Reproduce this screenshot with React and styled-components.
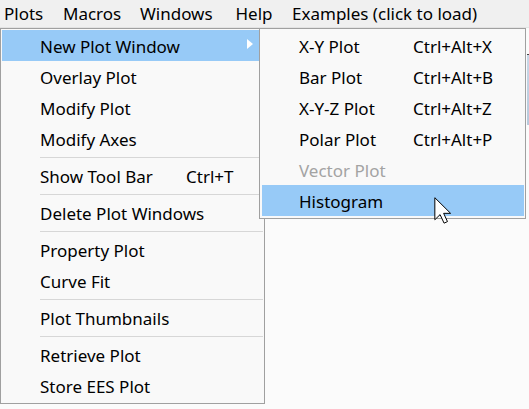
import React from "react";
import styled, { createGlobalStyle } from "styled-components";

const GlobalStyle = createGlobalStyle`
  html, body {
    margin: 0;
    padding: 0;
  }
  body {
    background: #fbfbfb;
    font-family: "Noto Sans", "Open Sans", sans-serif;
  }
`;

const Window = styled.div`
  position: relative;
  width: 529px;
  height: 409px;
  overflow: hidden;
  display: flex;
  flex-direction: column;
  background: #fbfbfb;
`;

const MenuBar = styled.div`
  display: flex;
  height: 28px;
  box-sizing: border-box;
  padding: 1px 0 0 4px;
  background: #f0f0f0;
  border-bottom: 1px solid #e3e3e3;
  font-size: 17px;
  line-height: 26px;
  color: #000;
`;

const BarItem = styled.div`
  width: ${(p) => p.$w}px;
  flex: none;
  white-space: nowrap;
`;

const Content = styled.div`
  flex: 1;
  display: flex;
  justify-content: flex-end;
`;

const EdgeStrip = styled.div`
  width: 2px;
  height: 70px;
  margin-top: 26px;
  border-top: 1px solid #444;
  background: linear-gradient(#c9d8e8, #b7c9dc);
`;

const MenuPanel = styled.div`
  position: absolute;
  top: 28px;
  left: ${(p) => p.$left}px;
  width: ${(p) => p.$width}px;
  box-sizing: border-box;
  padding: ${(p) => p.$pad};
  background: #f9f9f9;
  border: 1px solid #a0a0a0;
`;

const Item = styled.div`
  display: flex;
  height: 31px;
  box-sizing: border-box;
  padding: 3px 0 0 ${(p) => p.$indent}px;
  font-size: 17px;
  line-height: 28px;
  white-space: nowrap;
  color: ${(p) => (p.$disabled ? "#a3a3a3" : "#000")};
  background: ${(p) => (p.$active ? "#97caf7" : "transparent")};
`;

const Label = styled.span`
  width: ${(p) => p.$w}px;
  flex: none;
`;

const Shortcut = styled.span`
  flex: none;
`;

const SubArrow = styled.span`
  margin: 6px 10px 0 auto;
  width: 0;
  height: 0;
  border-top: 5.5px solid transparent;
  border-bottom: 5.5px solid transparent;
  border-left: 6px solid #fff;
`;

const Separator = styled.div`
  height: 1px;
  margin: 3px 0 2px 38px;
  background: #d7d7d7;
`;

const Pointer = styled.svg`
  position: absolute;
  left: 434px;
  top: 197px;
  width: 18px;
  height: 27px;
`;

const barItems = [
  { label: "Plots", w: 59 },
  { label: "Macros", w: 77 },
  { label: "Windows", w: 95.5 },
  { label: "Help", w: 56.5 },
  { label: "Examples (click to load)", w: 200 },
];

const plotsMenu = [
  { label: "New Plot Window", active: true, submenu: true },
  { label: "Overlay Plot" },
  { label: "Modify Plot" },
  { label: "Modify Axes" },
  "sep",
  { label: "Show Tool Bar", shortcut: "Ctrl+T" },
  "sep",
  { label: "Delete Plot Windows" },
  "sep",
  { label: "Property Plot" },
  { label: "Curve Fit" },
  "sep",
  { label: "Plot Thumbnails" },
  "sep",
  { label: "Retrieve Plot" },
  { label: "Store EES Plot" },
];

const newPlotMenu = [
  { label: "X-Y Plot", shortcut: "Ctrl+Alt+X" },
  { label: "Bar Plot", shortcut: "Ctrl+Alt+B" },
  { label: "X-Y-Z Plot", shortcut: "Ctrl+Alt+Z" },
  { label: "Polar Plot", shortcut: "Ctrl+Alt+P" },
  { label: "Vector Plot", disabled: true },
  { label: "Histogram", active: true },
];

function MenuItems({ items, indent, labelWidth }) {
  return items.map((item, i) =>
    item === "sep" ? (
      <Separator key={i} />
    ) : (
      <Item
        key={i}
        $indent={indent}
        $active={item.active}
        $disabled={item.disabled}
      >
        <Label $w={labelWidth}>{item.label}</Label>
        {item.shortcut && <Shortcut>{item.shortcut}</Shortcut>}
        {item.submenu && <SubArrow />}
      </Item>
    )
  );
}

export default function App() {
  return (
    <Window>
      <GlobalStyle />
      <MenuBar>
        {barItems.map((b) => (
          <BarItem key={b.label} $w={b.w}>
            {b.label}
          </BarItem>
        ))}
      </MenuBar>
      <Content>
        <EdgeStrip />
      </Content>

      <MenuPanel $left={0} $width={265} $pad="1px 1px 2px 1px">
        <MenuItems items={plotsMenu} indent={38} labelWidth={146} />
      </MenuPanel>

      <MenuPanel $left={259} $width={267} $pad="1px 1px 2px 2px">
        <MenuItems items={newPlotMenu} indent={37} labelWidth={114} />
      </MenuPanel>

      <Pointer viewBox="0 0 12.5 19">
        <path
          d="M0.5 0.5 L0.5 16 L4.2 12.4 L7 18.4 L9.4 17.3 L6.7 11.5 L11.6 11.5 Z"
          fill="#fff"
          stroke="#000"
          strokeWidth="0.7"
          strokeLinejoin="miter"
        />
      </Pointer>
    </Window>
  );
}
